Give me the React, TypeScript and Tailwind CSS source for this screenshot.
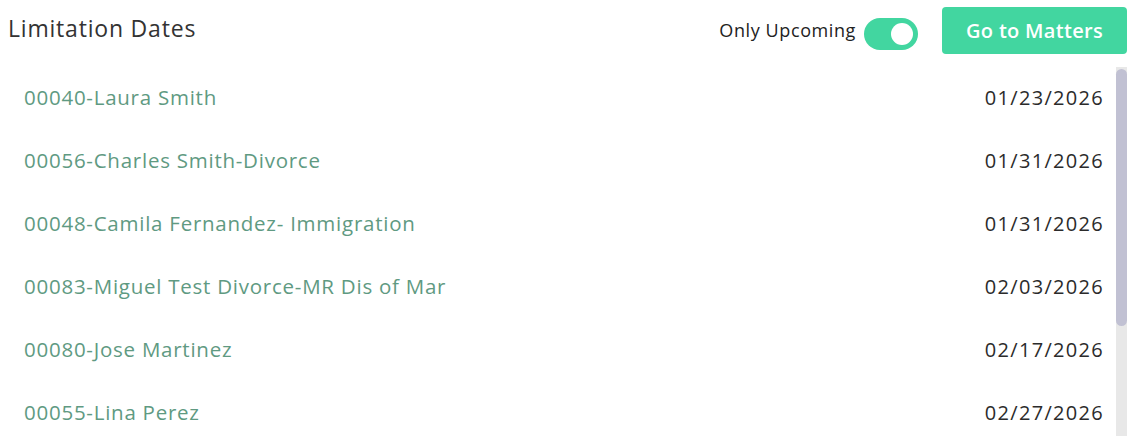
import { useState } from "react";

const rows = [
  { name: "00040-Laura Smith", date: "01/23/2026" },
  { name: "00056-Charles Smith-Divorce", date: "01/31/2026" },
  { name: "00048-Camila Fernandez- Immigration", date: "01/31/2026" },
  { name: "00083-Miguel Test Divorce-MR Dis of Mar", date: "02/03/2026" },
  { name: "00080-Jose Martinez", date: "02/17/2026" },
  { name: "00055-Lina Perez", date: "02/27/2026" },
];

export default function App() {
  const [upcoming, setUpcoming] = useState(true);

  return (
    <div className="w-[1134px] h-[436px] bg-white overflow-hidden font-['Open_Sans','Noto_Sans',sans-serif] flex flex-col">
      <div className="h-[67px] flex items-center pl-2 pr-[7px] shrink-0">
        <h2 className="text-[23px] tracking-[0.8px] text-[#333] flex-1 -mt-[10px]">Limitation Dates</h2>
        <span className="text-[18px] tracking-[0.6px] text-[#222] mr-[8px] -mt-[6px]">Only Upcoming</span>
        <button
          type="button"
          onClick={() => setUpcoming(!upcoming)}
          className={`w-[54px] h-[32px] rounded-full flex items-center px-[5px] ${upcoming ? "bg-[#42d6a0] justify-end" : "bg-gray-300 justify-start"}`}
        >
          <span className="w-[22px] h-[22px] rounded-full bg-white" />
        </button>
        <button
          type="button"
          className="ml-[24px] w-[185px] h-[47px] rounded-[4px] bg-[#42d6a0] text-white text-[20px] tracking-[0.3px] font-semibold -mt-[6px]"
        >
          Go to Matters
        </button>
      </div>
      <div className="flex-1 flex min-h-0 pr-[7px]">
        <div className="flex-1 overflow-hidden">
          {rows.map((r) => (
            <div key={r.name} className="h-[63px] flex items-center justify-between pl-6 pr-[12px]">
              <a className="text-[20.5px] tracking-[0.75px] text-[#5f9a82] cursor-pointer -mt-[2px]">{r.name}</a>
              <span className="text-[20px] tracking-[1.3px] text-[#2b2b2b] -mt-[2px]">{r.date}</span>
            </div>
          ))}
        </div>
        {/* scrollbar */}
        <div className="w-[11px] bg-[#e8e8e8] pt-[2px]">
          <div className="h-[257px] rounded-full bg-[#c1c1d3]" />
        </div>
      </div>
    </div>
  );
}
